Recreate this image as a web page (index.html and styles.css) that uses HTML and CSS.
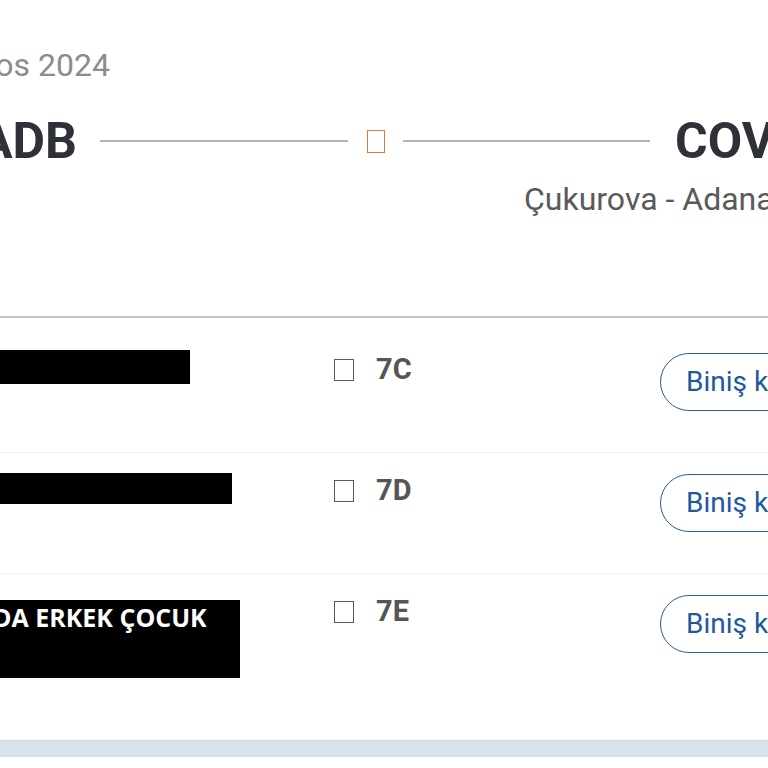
FILE: index.html
```html
<!DOCTYPE html>
<html lang="tr">
<head>
<meta charset="utf-8">
<title>Uçuş</title>
<link rel="stylesheet" href="styles.css">
</head>
<body>
<div class="page">
  <div class="date"><span>10 Ağustos 2024</span></div>
  <div class="route">
    <div class="code code-from"><span>ADB</span></div>
    <div class="line line-left"></div>
    <span class="plane"></span>
    <div class="line line-right"></div>
    <div class="code code-to">COV</div>
  </div>
  <div class="city">Çukurova - Adana Havalimanı</div>
  <div class="divider"></div>
  <div class="rows">
    <div class="row">
      <div class="name"><div class="redact r1"></div></div>
      <div class="seat"><span class="seat-icon"></span><span class="seat-no">7C</span></div>
      <div class="action"><span class="btn">Biniş kartı</span></div>
    </div>
    <div class="row">
      <div class="name"><div class="redact r2"></div></div>
      <div class="seat"><span class="seat-icon"></span><span class="seat-no">7D</span></div>
      <div class="action"><span class="btn">Biniş kartı</span></div>
    </div>
    <div class="row">
      <div class="name"><div class="redact r3"><span class="redact-text">DA ERKEK ÇOCUK</span></div></div>
      <div class="seat"><span class="seat-icon"></span><span class="seat-no">7E</span></div>
      <div class="action"><span class="btn">Biniş kartı</span></div>
    </div>
  </div>
  <div class="band"></div>
</div>
</body>
</html>
```

FILE: styles.css
```css
html, body {
  margin: 0;
  padding: 0;
  background: #ffffff;
}
body {
  font-family: Roboto, "Liberation Sans", sans-serif;
}
.page {
  width: 768px;
  height: 768px;
  overflow: hidden;
  background: #ffffff;
}
.date {
  margin-top: 45px;
  width: 110px;
  height: 40px;
  display: flex;
  justify-content: flex-end;
  white-space: nowrap;
  font-size: 32px;
  line-height: 40px;
  color: #8c8c8c;
}
.route {
  margin-top: 30px;
  height: 52px;
  display: flex;
  align-items: center;
  white-space: nowrap;
}
.code {
  font-size: 50px;
  font-weight: 700;
  color: #2e3138;
  line-height: 52px;
}
.code-from {
  width: 77px;
  display: flex;
  justify-content: flex-end;
  flex: none;
}
.line {
  flex: none;
  height: 1.5px;
  background: #b4b4b4;
}
.line-left {
  width: 248px;
  margin-left: 23px;
}
.line-right {
  width: 247px;
}
.plane {
  flex: none;
  box-sizing: border-box;
  width: 18px;
  height: 23px;
  margin: 0 18px 0 19px;
  border: 1.5px solid #e07a3c;
}
.code-to {
  margin-left: 25px;
}
.city {
  margin-top: 12px;
  padding-left: 524px;
  white-space: nowrap;
  font-size: 32px;
  line-height: 40px;
  color: #5a5a5a;
}
.divider {
  margin-top: 97px;
  height: 1.5px;
  background: #c4c4c4;
}
.rows {
  margin-top: 14px;
}
.row {
  height: 120px;
  border-bottom: 1px solid #f1f1f1;
  display: grid;
  grid-template-columns: 334px 326px 1fr;
  align-items: start;
  white-space: nowrap;
}
.row:last-child {
  border-bottom: none;
}
.redact {
  background: #000000;
}
.r1 { width: 190px; height: 34px; margin-top: 18px; }
.r2 { width: 232px; height: 31px; margin-top: 20px; }
.r3 { width: 240px; height: 78px; margin-top: 26px; overflow: hidden; }
.redact-text {
  display: block;
  padding-top: 2px;
  text-indent: -7px;
  font-family: "Open Sans", "DejaVu Sans", sans-serif;
  font-weight: 700;
  font-size: 25px;
  line-height: 30px;
  color: #ffffff;
}
.seat {
  margin-top: 22px;
  display: flex;
  align-items: center;
  gap: 22px;
}
.seat-icon {
  box-sizing: border-box;
  width: 20px;
  height: 22px;
  border: 1.5px solid #5a5a5a;
  margin-top: 3px;
}
.seat-no {
  font-size: 29px;
  line-height: 30px;
  font-weight: 700;
  color: #555555;
}
.action {
  padding-top: 21px;
}
.btn {
  box-sizing: border-box;
  display: inline-flex;
  align-items: center;
  height: 58px;
  padding: 0 24px 0 25px;
  border: 1.5px solid #2b5a94;
  border-radius: 29px;
  font-size: 28px;
  color: #1f5a9e;
}
.band {
  margin-top: 46px;
  height: 16px;
  background: #d8e2ec;
  border-top: 1px solid #cfd8e2;
}
```
